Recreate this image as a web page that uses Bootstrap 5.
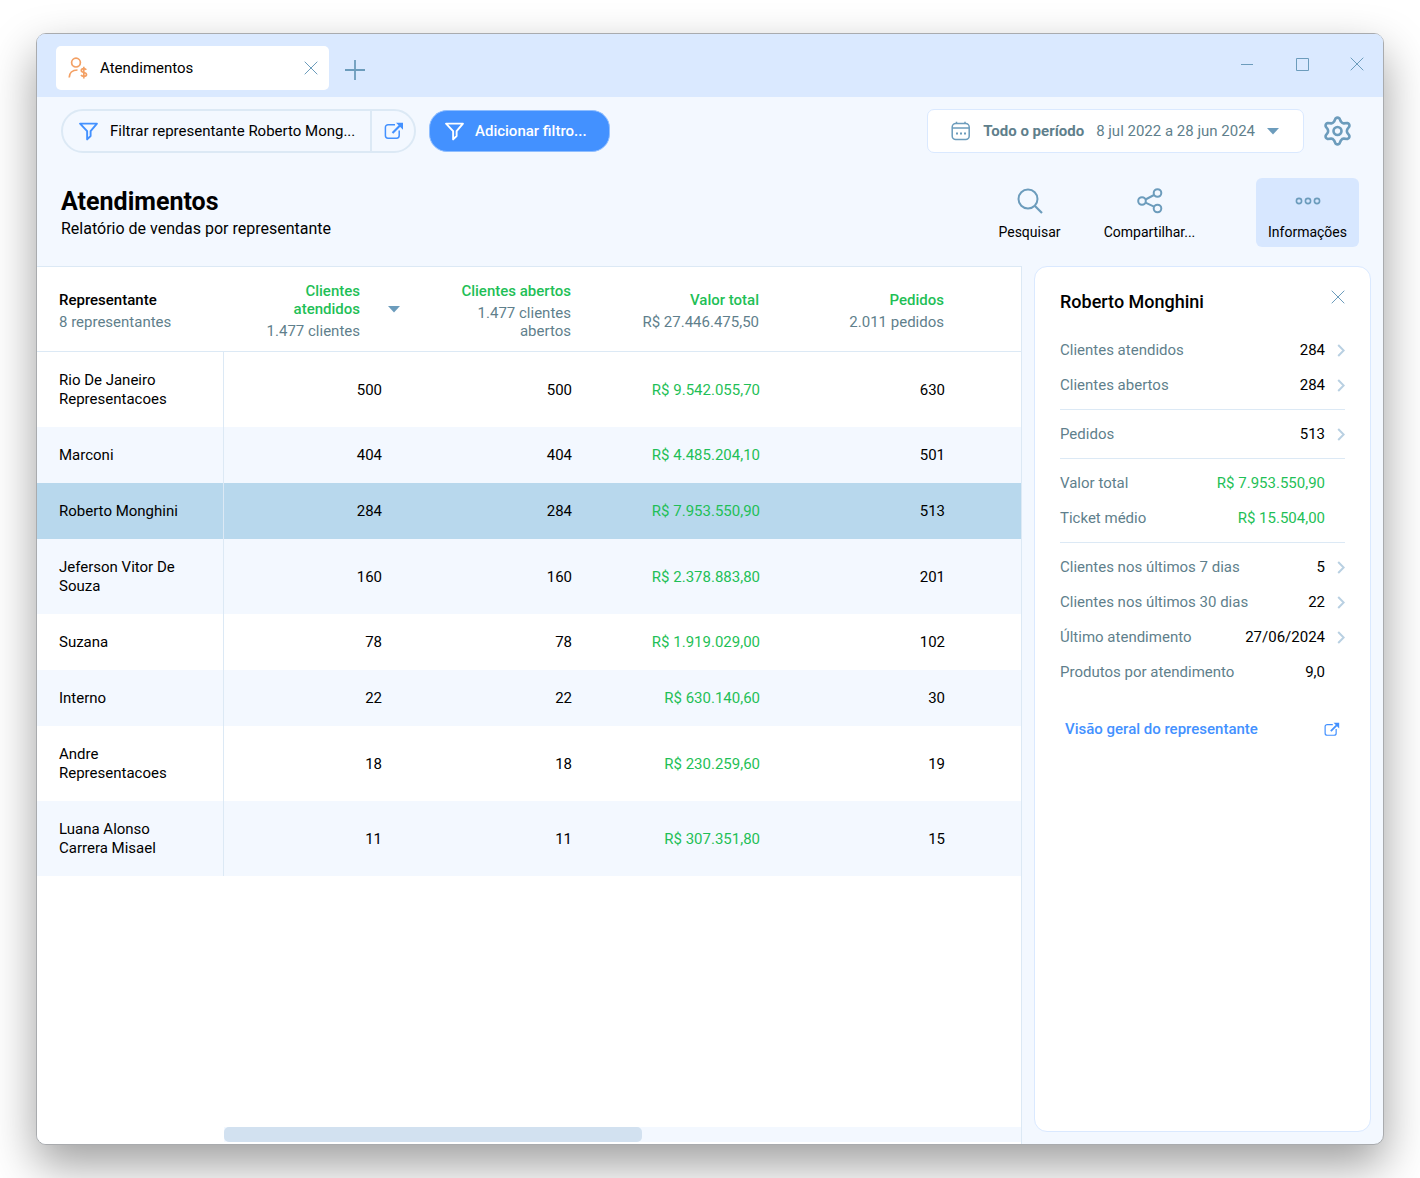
<!DOCTYPE html>
<html lang="pt-BR">
<head>
<meta charset="utf-8">
<meta name="viewport" content="width=device-width, initial-scale=1">
<title>Atendimentos</title>
<link href="https://cdn.jsdelivr.net/npm/bootstrap@5.3.0/dist/css/bootstrap.min.css" rel="stylesheet">
<style>
:root{--ink:#000;--muted:#5f7f8c;--ico:#6c9cbc;--blue:#4391ff;--green:#1fbf57;--line:#dce9f5;--pale:#f3f8ff;--sky:#dae9ff}
body{font-family:Roboto,"Liberation Sans",sans-serif;font-size:15px;line-height:19px;color:var(--ink);background:#fff;padding:33px 36px}
svg{display:block;flex:none;fill:none;stroke:currentColor}
button{font:inherit}
.page-shell{min-height:calc(100vh - 66px)}
.app-window{border:1px solid #a9abae;border-radius:10px;background:var(--pale);box-shadow:0 20px 46px rgba(0,0,0,.38)}
.title-bar{background:var(--sky);height:63px;padding:12px 19px 0 19px;color:var(--ico)}
.app-tab{width:273px;height:44px;background:#fff;border-radius:5px;padding:0 11px 0 12px;color:var(--ink);gap:10px}
.plain-btn{border:0;background:none;padding:0;color:var(--ico)}
.new-tab{margin:14px 0 0 16px}
.win-ctrls{gap:41px;padding-top:11px}
.filter-bar{padding:12px 31px 0 24px;gap:13px}
.filter-pill{height:44px;border:2px solid var(--line);border-radius:22px}
.filter-pill .main-part{width:309px;border-right:2px solid var(--line);padding:0 16px;gap:12px;color:var(--ink)}
.filter-pill .open-part{width:42px;padding-left:12px;color:var(--blue)}
.filter-pill svg{color:var(--blue)}
.add-btn{height:42px;border-radius:18px;border:1px solid #8fbeff;background:var(--blue);color:#fff;font-weight:500;padding:0 22px 0 15px;gap:11px}
.period-btn{height:44px;background:#fff;border:1px solid var(--sky);border-radius:7px;color:var(--muted);padding:0 24px 0 23px;gap:12px}
.period-btn svg{color:var(--ico)}
.gear-btn{margin-left:6px}
.page-head{padding:25px 24px 19px}
.page-head h1{font-size:25px;line-height:30px;font-weight:700;margin:9px 0 0}
.page-head p{font-size:16px;line-height:24px;margin:0}
.tool-btn{width:103px;height:69px;border:0;border-radius:6px;background:none;font-size:14px;color:var(--ink);padding:10px 0 0;gap:9px}
.tool-btn svg{color:var(--ico)}
.tool-btn.is-on{background:#d7e7ff;margin-left:38px}
.data-pane{background:#fff;border-top:1px solid var(--line);border-right:1px solid var(--line);border-bottom-left-radius:9px;min-width:0}
.report{width:100%;table-layout:fixed;border-collapse:separate;border-spacing:0}
.report th:first-child{padding-left:22px;text-align:left}
.report td,.report thead th{text-align:right;padding-right:32px}
.report thead th{padding-top:15px;padding-bottom:11px;line-height:18px;font-weight:500;color:var(--green);border-bottom:1px solid var(--line);vertical-align:middle}
.report thead th:nth-child(n+3){padding-right:33px}
.report thead th:first-child{color:var(--ink);text-align:left}
.report thead small{display:block;font-size:15px;font-weight:400;color:var(--muted);margin-top:4px}
.report tbody th{font-weight:400;border-right:1px solid var(--line);padding:19px 40px 18px 0}
.report tbody td{padding-top:19px;padding-bottom:18px}
.report tbody tr:nth-child(even){background:var(--pale)}
.report tbody tr.chosen{background:#b8d8ed}
.report .money{color:var(--green)}
.c-name{width:187px}.c-a{width:190px}.c-b{width:190px}.c-v{width:188px}.c-p{width:185px}
.sort-head{gap:28px}
.scroll-track{margin:0 0 2px 187px;height:15px;background:var(--pale)}
.scroll-thumb{height:15px;border-radius:5px;background:#d2e1f0}
.info-pane{width:337px;flex:none;margin:0 12px 12px;background:#fff;border:1px solid var(--sky);border-radius:13px;padding:23px 25px}
.info-pane h2{font-size:18px;line-height:24px;font-weight:500;margin:0}
.info-top{margin-bottom:19px}
.fact{height:35px;color:var(--muted)}
.fact dt{font-weight:400}
.fact dd{margin:0;color:var(--ink);margin-left:auto}
.fact dd.money{color:var(--green)}
.fact .go{width:20px;color:#b9d0e2}
.rule{border-top:1px solid var(--line);margin:6px 0 7px}
.overview{color:var(--blue);font-weight:500;padding:0 5px;margin-top:30px}
</style>
<script src="https://cdn.jsdelivr.net/npm/bootstrap@5.3.0/dist/js/bootstrap.bundle.min.js"></script>
</head>
<body>
<svg width="0" height="0" class="position-absolute" aria-hidden="true">
  <symbol id="funnel" viewBox="0 0 18 18"><path d="M1 1.5h16l-6 7.2v4.6l-3.3 3.2V8.700z" stroke-width="1.8" stroke-linejoin="round"/></symbol>
  <symbol id="external" viewBox="0 0 20 18"><path d="M11 2.8H4A2.6 2.6 0 0 0 1.4 5.4v8.2A2.6 2.6 0 0 0 4 16.200h8.600a2.600 2.600 0 0 0 2.600-2.600V8.500" stroke-width="1.500"/><path d="M8.500 11l7.500-7.500" stroke-width="2.200"/><path d="M12 .700h7v7z" fill="currentColor" stroke="none"/></symbol>
  <symbol id="chev" viewBox="0 0 8 13"><path d="M1.200 1l5.500 5.500-5.500 5.500" stroke-width="2"/></symbol>
  <symbol id="cross" viewBox="0 0 14 14"><path d="M.700.700l12.600 12.600M13.300.700L.700 13.300" stroke-width="1"/></symbol>
  <symbol id="caret" viewBox="0 0 12 7"><path d="M0 0h12L6 6.500z" fill="currentColor" stroke="none"/></symbol>
</svg>
<div class="page-shell d-flex">
<div class="app-window d-flex flex-column flex-grow-1">
  <header class="title-bar d-flex align-items-start rounded-top-3">
    <div class="app-tab d-flex align-items-center">
      <svg width="22" height="22" viewBox="0 0 22 22" style="color:#f3a064" stroke-width="1.700"><circle cx="8" cy="5.600" r="4.400"/><path d="M1.200 20.500c0-4.300 3-7.500 8.300-7.500"/><path d="M18.300 12.800c-.6-.9-1.500-1.200-2.600-1.200-1.400 0-2.400.7-2.400 1.900 0 2.700 5.200 1.300 5.200 4 0 1.200-1.100 1.900-2.600 1.900-1.200 0-2.300-.4-2.900-1.400M15.800 9.800v11.800"/></svg>
      <span>Atendimentos</span>
      <button class="plain-btn ms-auto" aria-label="Fechar aba"><svg width="14" height="14"><use href="#cross"/></svg></button>
    </div>
    <button class="plain-btn new-tab" aria-label="Nova aba"><svg width="20" height="20" viewBox="0 0 20 20" stroke-width="1.800"><path d="M10 0v20M0 10h20"/></svg></button>
    <div class="win-ctrls d-flex ms-auto">
      <button class="plain-btn" aria-label="Minimizar"><svg width="14" height="14" viewBox="0 0 14 14"><path d="M1 7.500h12"/></svg></button>
      <button class="plain-btn" aria-label="Maximizar"><svg width="14" height="14" viewBox="0 0 14 14"><path d="M1.500 1.500h12v12h-12z"/></svg></button>
      <button class="plain-btn" aria-label="Fechar"><svg width="14" height="14"><use href="#cross"/></svg></button>
    </div>
  </header>

  <div class="filter-bar d-flex align-items-center">
    <div class="filter-pill d-flex">
      <button class="plain-btn main-part d-flex align-items-center"><svg width="19" height="19"><use href="#funnel"/></svg><span class="text-nowrap">Filtrar representante Roberto Mong...</span></button>
      <button class="plain-btn open-part" aria-label="Abrir representante"><svg width="20" height="18"><use href="#external"/></svg></button>
    </div>
    <button class="add-btn d-flex align-items-center text-nowrap"><svg width="19" height="19"><use href="#funnel"/></svg>Adicionar filtro...</button>
    <button class="period-btn d-flex align-items-center text-nowrap ms-auto"><svg width="20" height="20" viewBox="0 0 20 20" stroke-width="1.500"><rect x="1.200" y="2.500" width="17" height="16" rx="3.500"/><path d="M1.200 7h17M5.500.800v2M14 .800v2"/><path d="M5 12.500h10" stroke-width="2" stroke-dasharray="2 2"/></svg><b class="fw-bold">Todo o período</b><span>8 jul 2022 a 28 jun 2024</span><svg width="12" height="7"><use href="#caret"/></svg></button>
    <button class="plain-btn gear-btn" aria-label="Configurações"><svg width="29" height="30" viewBox="-14.500 -15 29 30" stroke-width="2.600" stroke-linejoin="round"><circle r="4"/><path d="M-3.400-9.400L-2-12.500Q0-14.300 2-12.500L3.400-9.400Q4.800-7.400 6.400-7.600L9.800-8Q12.400-7.200 11.800-4.500L9.800-1.800Q9 0 9.800 1.800L11.800 4.500Q12.400 7.200 9.800 8L6.400 7.600Q4.800 7.400 3.400 9.400L2 12.500Q0 14.300-2 12.500L-3.400 9.400Q-4.800 7.400-6.400 7.600L-9.800 8Q-12.400 7.200-11.800 4.500L-9.800 1.800Q-9 0-9.800-1.800L-11.800-4.500Q-12.400-7.200-9.800-8L-6.400-7.600Q-4.800-7.400-3.400-9.400z"/></svg></button>
  </div>

  <div class="page-head d-flex align-items-start">
    <div><h1>Atendimentos</h1><p>Relatório de vendas por representante</p></div>
    <div class="d-flex ms-auto" style="gap:17px">
      <button class="tool-btn d-flex flex-column align-items-center"><svg width="26" height="26" viewBox="0 0 26 26" stroke-width="2"><circle cx="11" cy="11" r="9.500"/><path d="M18 18l7 7" stroke-width="2.200"/></svg>Pesquisar</button>
      <button class="tool-btn d-flex flex-column align-items-center"><svg width="26" height="26" viewBox="0 0 26 26" stroke-width="2"><circle cx="5" cy="13" r="3.800"/><circle cx="20.500" cy="5" r="3.800"/><circle cx="20.500" cy="20.500" r="3.800"/><path d="M8.500 11.500l8.500-4.500M8.500 14.700l8.500 4"/></svg>Compartilhar...</button>
      <button class="tool-btn is-on d-flex flex-column align-items-center"><svg width="26" height="26" viewBox="0 0 26 26" stroke-width="1.600"><circle cx="4" cy="13" r="2.600"/><circle cx="13" cy="13" r="2.600"/><circle cx="22" cy="13" r="2.600"/></svg>Informações</button>
    </div>
  </div>

  <main class="d-flex flex-grow-1">
    <section class="data-pane d-flex flex-column flex-grow-1">
      <table class="report">
        <colgroup><col class="c-name"><col class="c-a"><col class="c-b"><col class="c-v"><col class="c-p"><col></colgroup>
        <thead><tr>
          <th scope="col">Representante<small>8 representantes</small></th>
          <th scope="col" style="padding-right:14px"><div class="sort-head d-flex align-items-center justify-content-end"><div>Clientes<br>atendidos<small>1.477 clientes</small></div><svg width="12" height="7" style="color:var(--ico);margin-top:-4px"><use href="#caret"/></svg></div></th>
          <th scope="col">Clientes abertos<small>1.477 clientes<br>abertos</small></th>
          <th scope="col">Valor total<small>R$ 27.446.475,50</small></th>
          <th scope="col">Pedidos<small>2.011 pedidos</small></th>
          <th></th>
        </tr></thead>
        <tbody>
          <tr><th scope="row">Rio De Janeiro Representacoes</th><td>500</td><td>500</td><td class="money">R$ 9.542.055,70</td><td>630</td><td></td></tr>
          <tr><th scope="row">Marconi</th><td>404</td><td>404</td><td class="money">R$ 4.485.204,10</td><td>501</td><td></td></tr>
          <tr class="chosen"><th scope="row">Roberto Monghini</th><td>284</td><td>284</td><td class="money">R$ 7.953.550,90</td><td>513</td><td></td></tr>
          <tr><th scope="row">Jeferson Vitor De Souza</th><td>160</td><td>160</td><td class="money">R$ 2.378.883,80</td><td>201</td><td></td></tr>
          <tr><th scope="row">Suzana</th><td>78</td><td>78</td><td class="money">R$ 1.919.029,00</td><td>102</td><td></td></tr>
          <tr><th scope="row">Interno</th><td>22</td><td>22</td><td class="money">R$ 630.140,60</td><td>30</td><td></td></tr>
          <tr><th scope="row">Andre Representacoes</th><td>18</td><td>18</td><td class="money">R$ 230.259,60</td><td>19</td><td></td></tr>
          <tr><th scope="row">Luana Alonso Carrera Misael</th><td>11</td><td>11</td><td class="money">R$ 307.351,80</td><td>15</td><td></td></tr>
        </tbody>
      </table>
      <div class="scroll-track mt-auto"><div class="scroll-thumb" style="width:52.4%"></div></div>
    </section>

    <aside class="info-pane">
      <div class="info-top d-flex justify-content-between align-items-start"><h2>Roberto Monghini</h2><button class="plain-btn" aria-label="Fechar informações"><svg width="14" height="14"><use href="#cross"/></svg></button></div>
      <dl class="mb-0">
        <div class="fact d-flex align-items-center"><dt>Clientes atendidos</dt><dd>284</dd><span class="go"><svg class="ms-auto" width="8" height="13"><use href="#chev"/></svg></span></div>
        <div class="fact d-flex align-items-center"><dt>Clientes abertos</dt><dd>284</dd><span class="go"><svg class="ms-auto" width="8" height="13"><use href="#chev"/></svg></span></div>
        <div class="rule"></div>
        <div class="fact d-flex align-items-center"><dt>Pedidos</dt><dd>513</dd><span class="go"><svg class="ms-auto" width="8" height="13"><use href="#chev"/></svg></span></div>
        <div class="rule"></div>
        <div class="fact d-flex align-items-center"><dt>Valor total</dt><dd class="money">R$ 7.953.550,90</dd><span class="go"></span></div>
        <div class="fact d-flex align-items-center"><dt>Ticket médio</dt><dd class="money">R$ 15.504,00</dd><span class="go"></span></div>
        <div class="rule"></div>
        <div class="fact d-flex align-items-center"><dt>Clientes nos últimos 7 dias</dt><dd>5</dd><span class="go"><svg class="ms-auto" width="8" height="13"><use href="#chev"/></svg></span></div>
        <div class="fact d-flex align-items-center"><dt>Clientes nos últimos 30 dias</dt><dd>22</dd><span class="go"><svg class="ms-auto" width="8" height="13"><use href="#chev"/></svg></span></div>
        <div class="fact d-flex align-items-center"><dt>Último atendimento</dt><dd>27/06/2024</dd><span class="go"><svg class="ms-auto" width="8" height="13"><use href="#chev"/></svg></span></div>
        <div class="fact d-flex align-items-center"><dt>Produtos por atendimento</dt><dd>9,0</dd><span class="go"></span></div>
      </dl>
      <a href="#" class="overview d-flex align-items-center justify-content-between text-decoration-none">Visão geral do representante<svg width="16" height="15"><use href="#external"/></svg></a>
    </aside>
  </main>
</div>
</div>
</body>
</html>
